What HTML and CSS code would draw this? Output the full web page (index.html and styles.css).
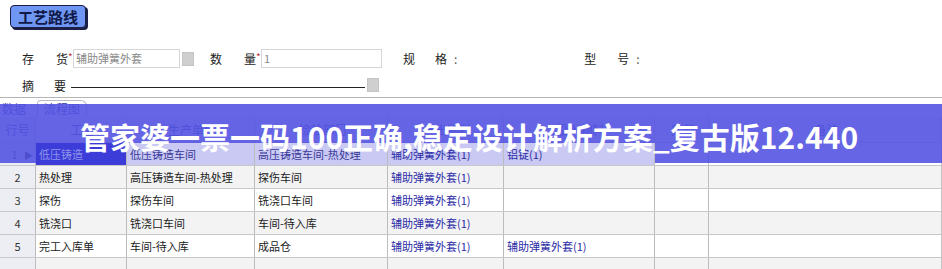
FILE: index.html
```html
<!DOCTYPE html>
<html>
<head>
  <meta charset="UTF-8">
  <meta name="viewport" content="width=device-width, initial-scale=1.0">
  <title>工艺路线</title>
  <link rel="stylesheet" href="styles.css">
</head>
<body>
  <div class="page">
    <div class="top">
      <span class="title-btn">工艺路线</span>
    </div>

    <div class="form">
      <div class="form-row">
        <span class="lbl w-inv"><i>存</i><i>货</i></span><span class="req">*</span>
        <span class="input inv">辅助弹簧外套</span>
        <span class="pick"></span>
        <span class="lbl w-qty"><i>数</i><i>量</i></span><span class="req">*</span>
        <span class="input qty">1</span>
        <span class="lbl w-spec"><i>规</i><i>格</i></span><span class="colon">:</span>
        <span class="lbl w-model"><i>型</i><i>号</i></span><span class="colon">:</span>
      </div>
      <div class="form-row">
        <span class="lbl w-memo"><i>摘</i><i>要</i></span>
        <span class="underline"></span>
        <span class="pick"></span>
      </div>
    </div>

    <div class="tabs">
      <span class="tab">数据</span>
      <span class="tab tab-flow">流程图</span>
    </div>

    <div class="grid">
      <div class="row head">
        <span class="num">行号</span>
        <span>工艺</span>
        <span>生产单位</span>
        <span>检验部门</span>
        <span>产出物料</span>
        <span>投入物料</span>
        <span>定额</span>
        <span class="c">备注</span>
      </div>
      <div class="row sel">
        <span class="num">1 <b class="arrow">▶</b></span>
        <span class="focus">低压铸造</span>
        <span class="hl">低压铸造车间</span>
        <span class="hl">高压铸造车间-热处理</span>
        <span class="hl link">辅助弹簧外套(1)</span>
        <span class="hl link">铝锭(1)</span>
        <span></span>
        <span></span>
      </div>
      <div class="row alt">
        <span class="num">2</span>
        <span>热处理</span>
        <span>高压铸造车间-热处理</span>
        <span>探伤车间</span>
        <span class="link">辅助弹簧外套(1)</span>
        <span></span>
        <span></span>
        <span></span>
      </div>
      <div class="row">
        <span class="num">3</span>
        <span>探伤</span>
        <span>探伤车间</span>
        <span>铣浇口车间</span>
        <span class="link">辅助弹簧外套(1)</span>
        <span></span>
        <span></span>
        <span></span>
      </div>
      <div class="row alt">
        <span class="num">4</span>
        <span>铣浇口</span>
        <span>铣浇口车间</span>
        <span>车间-待入库</span>
        <span class="link">辅助弹簧外套(1)</span>
        <span></span>
        <span></span>
        <span></span>
      </div>
      <div class="row">
        <span class="num">5</span>
        <span>完工入库单</span>
        <span>车间-待入库</span>
        <span>成品仓</span>
        <span class="link">辅助弹簧外套(1)</span>
        <span class="link">辅助弹簧外套(1)</span>
        <span></span>
        <span></span>
      </div>
      <div class="row alt">
        <span class="num"></span>
        <span></span>
        <span></span>
        <span></span>
        <span></span>
        <span></span>
        <span></span>
        <span></span>
      </div>
    </div>

    <div class="band"></div>
    <div class="banner">管家婆一票一码100正确,稳定设计解析方案_复古版12.440</div>
  </div>
</body>
</html>
```

FILE: styles.css
```css
body {
  margin: 0;
  font-family: "Noto Sans CJK SC", "DejaVu Sans", sans-serif;
  font-size: 11px;
  color: #222;
  background: #fff;
  overflow: hidden;
}
.page {
  position: relative;
  width: 942px;
  height: 269px;
  overflow: hidden;
}
.top {
  height: 49px;
  padding: 5px 0 0 10px;
  box-sizing: border-box;
}
.title-btn {
  display: inline-block;
  width: 74px;
  height: 21px;
  line-height: 21px;
  text-align: center;
  background: #6f96f2;
  border: 1px solid #1b1f45;
  border-radius: 4px;
  box-shadow: 2px 2px 0 #1b1f45;
  color: #0f1848;
  font-weight: bold;
  font-size: 15px;
}
.form {
  height: 49px;
  border-bottom: 1px solid #b4b4b4;
  box-sizing: border-box;
  font-size: 12px;
}
.form-row {
  display: flex;
  align-items: center;
  height: 19px;
  padding-left: 22px;
}
.form-row + .form-row {
  margin-top: 8px;
}
.lbl {
  display: flex;
  justify-content: space-between;
  color: #222;
  line-height: 14px;
}
.lbl i {
  font-style: normal;
}
.w-inv { width: 46px; }
.w-qty { width: 46px; margin-left: 16px; }
.w-spec { width: 44px; margin-left: 21px; }
.w-model { width: 45px; margin-left: 127px; }
.w-memo { width: 44px; }
.req {
  width: 5px;
  color: #c0303a;
  font-size: 10px;
  line-height: 10px;
  margin-top: -3px;
}
.colon {
  color: #555;
  margin-left: 7px;
}
.input {
  box-sizing: border-box;
  height: 19px;
  line-height: 17px;
  border: 1px solid #d6d6d6;
  padding-left: 2px;
  color: #888;
  background: #fff;
  font-size: 11px;
}
.inv { width: 107px; }
.qty { width: 121px; }
.pick {
  width: 12px;
  height: 14px;
  margin-left: 2px;
  background: #cfcfcf;
  border: 1px solid #c4c4c4;
  box-sizing: border-box;
}
.underline {
  width: 294px;
  height: 11px;
  margin-left: 5px;
  border-bottom: 1px solid #222;
  align-self: flex-start;
}
.form-row .underline + .pick {
  align-self: flex-start;
  margin-top: 2px;
}
.tabs {
  display: flex;
  align-items: flex-end;
  height: 19px;
  padding-top: 1px;
  box-sizing: border-box;
  font-size: 12px;
}
.tab {
  color: #2d2d9c;
  padding: 0 3px 0 2px;
  line-height: 16px;
}
.tab-flow {
  margin-left: 8px;
  padding: 0 6px;
  border: 1px solid #b9b9c8;
  border-bottom: none;
  border-radius: 4px 6px 0 0;
  background: #fff;
}
.grid {
  width: 941px;
  border-right: 1px solid #c4c4c4;
}
.row {
  display: grid;
  grid-template-columns: 36px 91px 128px 133px 116px 151px 54px 1fr;
  height: 23px;
  border-bottom: 1px solid #c8c8c8;
  box-sizing: border-box;
  background: #fff;
}
.row.alt {
  background: #f3f3f4;
}
.row > span {
  border-right: 1px solid #bcbcbc;
  padding-left: 3px;
  line-height: 22px;
  white-space: nowrap;
  overflow: hidden;
}
.row > span:last-child {
  border-right: none;
}
.row .num {
  background: #eceef4;
  text-align: center;
  padding-left: 0;
  font-size: 11px;
  color: #333;
}
.row.head {
  height: 26px;
  background: #eef0f6;
}
.row.head > span {
  line-height: 25px;
  color: #2c2c8a;
  text-align: center;
  font-size: 12px;
}
.row.sel .num {
  text-align: right;
  padding-right: 2px;
}
.arrow {
  font-size: 9px;
  color: #111;
  margin-left: 4px;
}
.row .focus {
  position: relative;
  z-index: 2;
  background: #3c3cd8;
  color: #8e93ec;
}
.row .hl {
  position: relative;
  z-index: 2;
  background: #c9c9f3;
  color: #3a3a9a;
}
.row .link {
  color: #2b2ba6;
}
.band {
  position: absolute;
  z-index: 1;
  left: 0;
  top: 104px;
  width: 942px;
  height: 59px;
  background: rgba(84, 84, 226, 0.9);
}
.banner {
  position: absolute;
  z-index: 3;
  left: 0;
  top: 106px;
  width: 942px;
  height: 59px;
  color: #fff;
  font-size: 30px;
  font-weight: bold;
  line-height: 60px;
  padding-left: 80px;
  box-sizing: border-box;
  white-space: nowrap;
}
```
